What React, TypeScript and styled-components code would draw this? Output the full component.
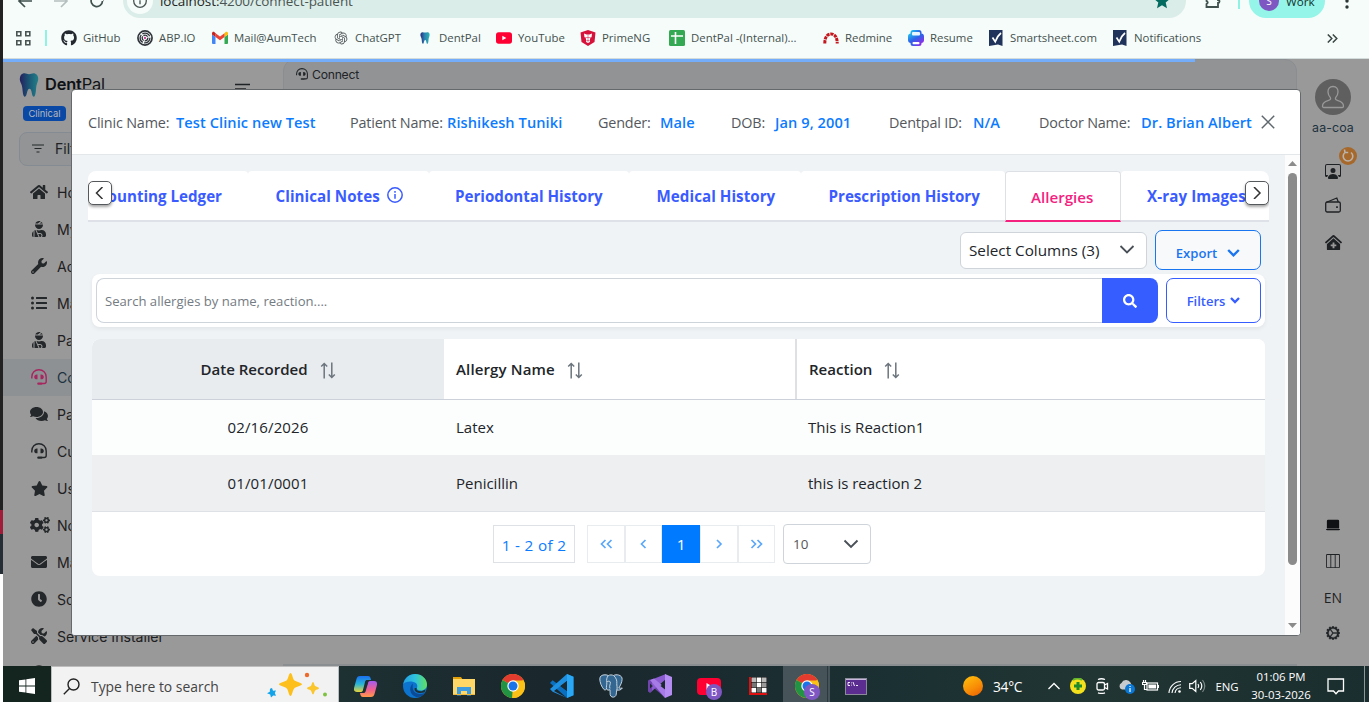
import type { ReactNode } from "react";
import styled, { createGlobalStyle } from "styled-components";
import { FaGithub, FaHome, FaUserInjured, FaWrench, FaListUl, FaComments, FaStar, FaCogs, FaEnvelope, FaClock, FaTools, FaSearch, FaClinicMedical } from "react-icons/fa";
import { BsPersonWorkspace, BsLaptopFill, BsLayoutThreeColumns, BsGearWideConnected } from "react-icons/bs";
import { SiOpenai } from "react-icons/si";

const GlobalStyle = createGlobalStyle`
  * { box-sizing: border-box; }
  body {
    margin: 0;
    overflow: hidden;
    font-family: "Open Sans", "Noto Sans", sans-serif;
    background: #fff;
  }
  svg { display: block; flex: none; }
`;

/* ---------- shell ---------- */

const Screen = styled.div`
  display: flex;
  width: 1369px;
  height: 702px;
  overflow: hidden;
`;

const EdgeStrip = styled.div`
  width: 3px;
  flex: none;
  background: linear-gradient(#222 0 510px, #a01c38 510px 534px, #252d35 534px 574px, #fff 574px);
`;

const Desktop = styled.div`
  flex: 1;
  min-width: 0;
  display: flex;
  flex-direction: column;
`;

const Text = styled.span<{ $ls?: number }>`
  white-space: nowrap;
  letter-spacing: ${(p) => p.$ls ?? 0}px;
`;

/* ---------- browser ---------- */

const BrowserHead = styled.div`
  height: 59px;
  flex: none;
  overflow: hidden;
  background: #f5fcfa;
  border-bottom: 1px solid #d3dcda;
`;

const AddressRow = styled.div`
  height: 34px;
  margin-top: -16px;
  display: flex;
  align-items: center;
`;

const NavIcons = styled.div`
  width: 120px;
  display: flex;
  gap: 20px;
  padding-left: 14px;
`;

const AddressBar = styled.div`
  width: 1063px;
  height: 34px;
  border-radius: 17px;
  background: #dbede8;
  display: flex;
  align-items: center;
  padding: 0 16px 0 4px;
  font-size: 13.5px;
  color: #4a5553;
  b { font-weight: 400; color: #1d2625; }
`;

const InfoBadge = styled.div`
  width: 26px;
  height: 26px;
  border-radius: 50%;
  background: #f5fcfa;
  display: grid;
  place-items: center;
  margin-right: 7px;
`;

const BarFill = styled.div`
  flex: 1;
`;

const Divider = styled.div`
  width: 2px;
  height: 16px;
  background: #8ff3e4;
`;

const Profile = styled.div`
  width: 76px;
  height: 34px;
  margin-left: 9px;
  border-radius: 17px;
  background: #94f5e8;
  display: flex;
  align-items: center;
  gap: 7px;
  padding: 0 0 0 10px;
  font-size: 11.6px;
  color: #12302c;
`;

const Disc = styled.span<{ $size: number }>`
  width: ${(p) => p.$size}px;
  height: ${(p) => p.$size}px;
  border-radius: 50%;
  background: #7e57c2;
  color: #fff;
  font-size: 10px;
  display: grid;
  place-items: center;
  flex: none;
`;

const Bookmarks = styled.div`
  height: 40px;
  display: flex;
  align-items: center;
  padding-left: 12px;
  font-size: 11.4px;
  color: #45514f;
  span { margin-top: -2px; }
`;

const Bookmark = styled.div<{ $w: number }>`
  width: ${(p) => p.$w}px;
  flex: none;
  display: flex;
  align-items: center;
  gap: 6px;
`;

/* ---------- app ---------- */

const AppArea = styled.div`
  position: relative;
  height: 607px;
  flex: none;
  display: flex;
  background: #999;
  overflow: hidden;
  font-family: Inter, sans-serif;
`;

const Progress = styled.div`
  position: absolute;
  left: 0;
  top: 0;
  width: 1192px;
  height: 3px;
  background: #74aefb;
`;

const Sidebar = styled.div`
  width: 280px;
  flex: none;
`;

const Brand = styled.div`
  height: 44px;
  padding: 14px 33px 0 16px;
  display: flex;
  align-items: flex-start;
  font-size: 16.4px;
  color: #101214;
  svg:last-child { margin-left: auto; margin-top: 10px; }
`;

const BrandName = styled.div`
  margin: 1px 0 0 6px;
  letter-spacing: -0.15px;
  b { font-weight: 600; }
`;

const ClinicBadge = styled.div`
  width: 43px;
  height: 15px;
  margin: 3px 0 0 20px;
  border-radius: 4px;
  background: #0a48a6;
  color: #b3b8bf;
  font-size: 9.4px;
  line-height: 15px;
  text-align: center;
`;

const FilterBox = styled.div`
  height: 34px;
  margin: 11px 20px 8px 16px;
  border: 1px solid #858b92;
  border-radius: 8px;
  background: #929495;
  display: flex;
  align-items: center;
  gap: 11px;
  padding: 0 0 2px 12px;
  font-size: 14px;
  color: #202325;
`;

const MenuItem = styled.div<{ $active?: boolean }>`
  height: 37px;
  display: flex;
  align-items: center;
  padding-left: 27px;
  font-size: 14.1px;
  color: ${(p) => (p.$active ? "#1d3240" : "#1d2022")};
  background: ${(p) => (p.$active ? "#8e9193" : "transparent")};
  svg { color: ${(p) => (p.$active ? "#a82560" : "#25282a")}; }
`;

const MenuIcon = styled.div`
  width: 18px;
  margin: -1px 9px 0 0;
  display: grid;
  place-items: center;
`;

const Main = styled.div`
  width: 1014px;
  flex: none;
  display: flex;
  flex-direction: column;
  justify-content: space-between;
`;

const MainTop = styled.div`
  height: 60px;
  border: 1px solid #8a8e91;
  border-radius: 12px 12px 0 0;
  background: #929395;
  padding: 7px 0 0 12px;
  display: flex;
  gap: 4px;
  font-size: 12.2px;
  letter-spacing: -0.25px;
  color: #202427;
  svg { margin-top: 1px; }
`;

const MainFoot = styled.div`
  height: 2px;
  background: #8a8e91;
`;

const Rail = styled.div`
  flex: 1;
  display: flex;
  flex-direction: column;
  align-items: center;
  color: #1f2225;
  font-size: 14px;
`;

const Avatar = styled.div`
  width: 36px;
  height: 36px;
  margin-top: 20px;
  border-radius: 50%;
  background: #5f5f5f;
  display: grid;
  place-items: center;
`;

const UserName = styled.div`
  margin: 5px 0 3px;
  font-size: 12.4px;
  line-height: 16px;
  letter-spacing: 0.1px;
  color: #1d3340;
`;

const RailSlot = styled.div<{ $h: number; $top?: number }>`
  position: relative;
  height: ${(p) => p.$h}px;
  margin-top: ${(p) => p.$top ?? 0}px;
  display: grid;
  place-items: center;
`;

const SyncBadge = styled.div`
  position: absolute;
  left: 14px;
  top: -8px;
`;

const Language = styled(Text)`
  font-family: "Open Sans", sans-serif;
`;

/* ---------- modal ---------- */

const Modal = styled.div`
  position: absolute;
  left: 68px;
  top: 30px;
  width: 1230px;
  height: 547px;
  border: 1px solid #65696c;
  border-radius: 4px;
  background: #fff;
  overflow: hidden;
  display: flex;
  flex-direction: column;
  font-family: "Open Sans", "Noto Sans", sans-serif;
  color: #212529;
`;

const ModalHead = styled.div`
  height: 65px;
  flex: none;
  border-bottom: 1px solid #e4e7ea;
  display: flex;
  align-items: center;
  padding-left: 16px;
  color: #54585c;
`;

const Field = styled.div<{ $w: number; $label: number }>`
  width: ${(p) => p.$w}px;
  display: flex;
  align-items: baseline;
  white-space: nowrap;
  span:first-child { width: ${(p) => p.$label}px; flex: none; font-size: 14.4px; letter-spacing: -0.18px; }
`;

const Value = styled(Text)`
  color: #0b7bff;
  font-size: 14.6px;
  font-weight: 600;
`;

const ModalBody = styled.div`
  flex: 1;
  display: flex;
  background: #eff3f6;
`;

const Content = styled.div`
  width: 1213px;
  padding: 16px 16px 0;
`;

const Scrollbar = styled.div`
  width: 15px;
  background: #fcfcfc;
  display: flex;
  flex-direction: column;
  align-items: center;
  padding: 6px 0 7px;
`;

const Thumb = styled.div`
  width: 9px;
  height: 392px;
  margin: 7px 0 auto;
  border-radius: 5px;
  background: #8b8b8b;
`;

const TabBar = styled.div`
  position: relative;
  width: 1181px;
  height: 51px;
  display: flex;
  overflow: hidden;
  border-radius: 8px 8px 0 0;
`;

const Tab = styled.div<{ $w: number; $active?: boolean; $end?: boolean }>`
  width: ${(p) => p.$w}px;
  flex: none;
  display: flex;
  align-items: center;
  justify-content: ${(p) => (p.$end ? "flex-end" : "flex-start")};
  gap: 7px;
  padding: 1px ${(p) => (p.$end ? 26 : 20)}px 0 ${(p) => (p.$active ? 25 : 26)}px;
  background: #fff;
  border-radius: 4px 4px 0 0;
  border: ${(p) => (p.$active ? "1px solid #dde1e6" : "0")};
  border-bottom: 2px solid ${(p) => (p.$active ? "#f5217f" : "#dee2e8")};
  color: ${(p) => (p.$active ? "#f5217f" : "#3a5bff")};
  font-size: 15.15px;
  font-weight: ${(p) => (p.$active ? 600 : 700)};
  overflow: hidden;
  svg { margin-top: -2px; }
`;

const ScrollButton = styled.div<{ $right?: boolean }>`
  position: absolute;
  top: 10px;
  ${(p) => (p.$right ? "right: 0;" : "left: 0;")}
  width: 24px;
  height: 24px;
  border: 1px solid #55595c;
  border-radius: 5px;
  background: #fff;
  box-shadow: 0 2px 3px rgba(0, 0, 0, 0.35);
  display: grid;
  place-items: center;
  color: #333;
`;

const Tools = styled.div`
  height: 40px;
  margin: 8px 8px 4px 0;
  display: flex;
  justify-content: flex-end;
  align-items: center;
  gap: 8px;
`;

const Select = styled.div<{ $w: number; $h: number }>`
  width: ${(p) => p.$w}px;
  height: ${(p) => p.$h}px;
  padding: 0 11px 0 8px;
  border: 1px solid #ced4da;
  border-radius: 6px;
  background: #fff;
  display: flex;
  align-items: center;
  justify-content: space-between;
  font-size: 15.25px;
  svg { color: #495057; }
`;

const PageSize = styled(Select)`
  margin-left: 8px;
  padding-left: 9px;
  border-radius: 4px;
  font-size: 13.4px;
  color: #555;
`;

const OutlineButton = styled.div<{ $w: number; $color: string }>`
  width: ${(p) => p.$w}px;
  align-self: stretch;
  border: 1px solid ${(p) => p.$color};
  border-radius: 7px;
  color: ${(p) => p.$color};
  display: flex;
  align-items: center;
  justify-content: center;
  font-size: 13.1px;
  font-weight: 600;
`;

const ExportButton = styled(OutlineButton)`
  background: #f7f9fb;
  gap: 10px;
  padding-top: 5px;
`;

const SearchCard = styled.div`
  width: 1173px;
  height: 53px;
  margin: 0 4px 12px;
  padding: 4px;
  border-radius: 8px;
  background: #fff;
  box-shadow: 0 2px 4px rgba(0, 0, 0, 0.06);
  display: flex;
`;

const SearchInput = styled.div`
  width: 1006px;
  border: 1px solid #ced4da;
  border-right: 0;
  border-radius: 8px 0 0 8px;
  display: flex;
  align-items: center;
  padding-left: 8px;
  font-size: 13.1px;
  color: #747b82;
`;

const SearchButton = styled.div`
  width: 56px;
  margin-right: 8px;
  border-radius: 0 8px 8px 0;
  background: #365dff;
  color: #fff;
  display: grid;
  place-items: center;
`;

const FilterButton = styled(OutlineButton)`
  font-size: 13px;
  gap: 5px;
  padding-top: 1px;
`;

const TableCard = styled.div`
  width: 1173px;
  height: 237px;
  margin: 0 4px;
  border-radius: 8px;
  background: #fff;
  overflow: hidden;
`;

const Row = styled.div<{ $h: number; $bg?: string; $line?: string }>`
  display: grid;
  grid-template-columns: 352px 352px 1fr;
  height: ${(p) => p.$h}px;
  background: ${(p) => p.$bg ?? "#fff"};
  border-bottom: 1px solid ${(p) => p.$line ?? "transparent"};
  font-size: 15px;
`;

const HeadRow = styled(Row)`
  grid-template-columns: 352px 353px 1fr;
  font-size: 15.05px;
`;

const Cell = styled.div<{ $center?: boolean }>`
  display: flex;
  align-items: center;
  justify-content: ${(p) => (p.$center ? "center" : "flex-start")};
  padding: 0 12px;
  letter-spacing: ${(p) => (p.$center ? 0.15 : 0)}px;
`;

const HeadCell = styled(Cell)<{ $shade?: boolean; $rule?: boolean }>`
  gap: 12px;
  font-weight: 600;
  letter-spacing: 0;
  background: ${(p) => (p.$shade ? "#e9ecef" : "transparent")};
  border-right: ${(p) => (p.$rule ? "2px solid #dee0e3" : "0")};
  svg { margin-top: 3px; }
`;

const Pager = styled.div`
  height: 64px;
  display: flex;
  align-items: center;
  padding-left: 401px;
`;

const PageInfo = styled.div`
  width: 82px;
  height: 38px;
  margin-right: 12px;
  padding-top: 1px;
  border: 1px solid #dee2e6;
  color: #0b7bff;
  font-size: 15.3px;
  letter-spacing: 0.3px;
  display: grid;
  place-items: center;
`;

const PageButton = styled.div<{ $active?: boolean; $w?: number }>`
  width: ${(p) => p.$w ?? 37}px;
  height: 38px;
  border: 1px solid ${(p) => (p.$active ? "#007bff" : "#e9ecef")};
  background: ${(p) => (p.$active ? "#007bff" : "#fff")};
  color: ${(p) => (p.$active ? "#fff" : "#5aa7fb")};
  font-size: 15.3px;
  display: grid;
  place-items: center;
`;

/* ---------- taskbar ---------- */

const Taskbar = styled.div`
  height: 36px;
  flex: none;
  display: flex;
  align-items: stretch;
  background: linear-gradient(90deg, #1d3032 0 25%, #1a272d 40%, #1b3032 65%, #213533 80%, #1b2e2f);
  color: #fff;
`;

const Start = styled.div`
  width: 48px;
  background: #14241f;
  display: grid;
  place-items: center;
`;

const TaskSearch = styled.div`
  width: 288px;
  background: #f2f2f2;
  border: 1px solid #bdbdbd;
  border-bottom: 0;
  display: flex;
  align-items: center;
  padding: 4px 10px 0 11px;
  color: #444;
  font-size: 13.9px;
  svg:last-child { margin-left: auto; margin-top: -3px; }
`;

const TaskIcons = styled.div`
  display: flex;
  width: 622px;
  padding-left: 2px;
`;

const TaskIcon = styled.div<{ $active?: boolean }>`
  position: relative;
  width: 49px;
  display: grid;
  place-items: center;
  padding-top: 4px;
  background: ${(p) => (p.$active ? "linear-gradient(90deg, transparent 1px, #46545a 1px 45px, #2c3a3e 45px 46px, #46545a 46px 48px, transparent 48px)" : "none")};
`;

const TaskBadge = styled.div`
  position: absolute;
  left: 22px;
  top: 18px;
`;

const Weather = styled.div`
  width: 81px;
  display: flex;
  align-items: center;
  gap: 10px;
  padding: 4px 0 0 2px;
  font-size: 13.8px;
`;

const Sun = styled.div`
  width: 20px;
  height: 20px;
  border-radius: 50%;
  background: linear-gradient(150deg, #ffc40c, #f88a06 60%, #e85d05);
`;

const Tray = styled.div<{ $w: number }>`
  width: ${(p) => p.$w}px;
  display: grid;
  place-items: center;
  padding-top: 4px;
  font-size: 11.4px;
`;

const Clock = styled.div`
  width: 72px;
  padding-top: 2px;
  font-size: 11.4px;
  line-height: 17.5px;
  text-align: center;
`;

const ShowDesktop = styled.div`
  margin-left: 9px;
  border-left: 1px solid #8b9696;
`;

/* ---------- drawings ---------- */

const Tooth = ({ w, h, dim }: { w: number; h: number; dim?: boolean }) => (
  <svg width={w} height={h} viewBox="0 0 20 24">
    <defs>
      <linearGradient id={dim ? "toothDim" : "tooth"} x1="0" x2="1">
        <stop offset="0" stopColor={dim ? "#252060" : "#2b2b80"} />
        <stop offset=".45" stopColor={dim ? "#1a5272" : "#2b7fb0"} />
        <stop offset="1" stopColor={dim ? "#238089" : "#2fb5b0"} />
      </linearGradient>
    </defs>
    <path fill={`url(#${dim ? "toothDim" : "tooth"})`} d="M4 .6C6.500-.3 8 1.200 10 1.200S14-.3 16.300.7c2.800 1.200 3.400 4.300 2.600 7.400-.6 2.400-1.400 3.600-1.700 6.400-.3 3-.5 9.200-2.500 9.200-2.200 0-1.500-7.900-4.200-7.900-2.800 0-2.300 7.900-4.600 7.900-2 0-2.200-6-2.600-9C3 11.800 1.800 10.500 1.100 8.100.3 5 1.200 1.700 4 .6z" />
  </svg>
);

const Headset = ({ size }: { size: number }) => (
  <svg width={size} height={size} viewBox="0 0 16 16" fill="none" stroke="currentColor" strokeWidth="1.400">
    <path d="M.8 9.500V8C.8 3.800 3.800.8 7.900.8s7.300 3 7.300 7.200v4.500c0 1.200-.8 2-2 2h-2.600" />
    <path fill="currentColor" stroke="none" d="M6.500 5.500v4.800c-2 .3-3.300-.8-3.300-2.400s1.300-2.700 3.300-2.400zM9.500 5.500v4.800c2 .3 3.300-.8 3.300-2.400S11.500 5.200 9.500 5.500z" />
    <path d="M7.300 14.700h3" strokeWidth="2.200" strokeLinecap="round" />
  </svg>
);

const WalletIcon = () => (
  <svg width="16" height="16" viewBox="0 0 16 16" fill="none" stroke="currentColor" strokeWidth="1.300">
    <rect x=".7" y="5" width="14.600" height="10" rx="1.500" />
    <path d="M1 5.500L11.800 1l1.500 4" />
    <path d="M12 9.300v1.600" strokeWidth="1.700" />
  </svg>
);

const InfoIcon = ({ size }: { size: number }) => (
  <svg width={size} height={size} viewBox="0 0 16 16" fill="none" stroke="currentColor" strokeWidth="1.500">
    <circle cx="8" cy="8" r="7.200" />
    <path d="M8 7v4.800M8 4v1.700" />
  </svg>
);

const GmailIcon = () => (
  <svg width="16" height="16" viewBox="0 0 16 16">
    <path fill="#4285f4" d="M1 14h2.500V7L0 4.500V13a1 1 0 0 0 1 1z" />
    <path fill="#34a853" d="M12.500 14H15a1 1 0 0 0 1-1V4.500L12.500 7z" />
    <path fill="#fbbc04" d="M12.500 3.500V7L16 4.500V3.200c0-1.300-1.500-2-2.500-1.200z" />
    <path fill="#ea4335" d="M3.500 7V3.300L8 6.600l4.500-3.300V7L8 10.300z" />
    <path fill="#c5221f" d="M0 3.200v1.300L3.500 7V3.300L2.500 2.200C1.500 1.200 0 1.900 0 3.200z" />
  </svg>
);

const AbpIcon = () => (
  <svg width="16" height="16" viewBox="0 0 17 17" fill="none" stroke="#30343a">
    <circle cx="8.500" cy="8.500" r="7.500" strokeWidth="1.800" />
    <circle cx="8.500" cy="8.500" r="5.200" strokeWidth="1.400" strokeDasharray="9 1.500" />
    <circle cx="8.500" cy="8.500" r="3" strokeWidth="1.400" strokeDasharray="5 1" />
    <circle cx="8.500" cy="8.500" r="1.200" fill="#c2418f" stroke="none" />
  </svg>
);

const YoutubeIcon = ({ w, h }: { w: number; h: number }) => (
  <svg width={w} height={h} viewBox="0 0 24 17">
    <rect width="24" height="17" rx="4" fill="#ff0033" />
    <path d="M9.500 5v7l6-3.500z" fill="#fff" />
  </svg>
);

const PrimeIcon = () => (
  <svg width="16" height="16" viewBox="0 0 16 16">
    <path fill="#d6113a" d="M8 0l7.500 2.400-1 9.600L8 16l-6.500-4L.5 2.400z" />
    <path fill="#fff" d="M4 3.600l2.500.8h3l2.500-.8-.5 4-1.500 1v3L8.800 13H7.200L6 11.600v-3l-1.500-1z" />
    <path stroke="#d6113a" strokeWidth=".5" d="M8 4.500V13M4 7.500h8M6.300 10.500h3.400" />
  </svg>
);

const SheetIcon = () => (
  <svg width="16" height="16" viewBox="0 0 16 16">
    <rect width="16" height="16" rx="1.500" fill="#34a853" />
    <path d="M6.500 2v12M2 6h12" stroke="#fff" strokeWidth="1.600" />
  </svg>
);

const RedmineIcon = () => (
  <svg width="16" height="16" viewBox="0 0 16 16" fill="none">
    <path d="M1.800 13.500C1.800 6 5 4 8 4s6.200 2 6.200 9.500" stroke="#c4161c" strokeWidth="3" strokeDasharray="3.200 .8" />
  </svg>
);

const ResumeIcon = () => (
  <svg width="16" height="16" viewBox="0 0 16 16">
    <defs>
      <linearGradient id="resume" x1="0" y1="0" x2="1" y2="1">
        <stop offset="0" stopColor="#1fc8ee" /><stop offset=".5" stopColor="#2e62e8" /><stop offset="1" stopColor="#9b26e8" />
      </linearGradient>
    </defs>
    <rect x="2.500" width="11" height="16" rx="2.500" fill="url(#resume)" />
    <rect y="3.500" width="16" height="9.500" rx="3" fill="url(#resume)" />
    <rect x="4" y="2" width="8" height="3.500" rx="1" fill="#e8f6ff" />
    <rect x="4.500" y="12" width="7" height="2.200" rx="1" fill="#fff" />
  </svg>
);

const SmartsheetIcon = () => (
  <svg width="15" height="16" viewBox="0 0 15 16">
    <path fill="#20335b" d="M0 0h13.500v16L9 14.500 0 16z" />
    <path d="M3.500 7.500l2.700 4.200C7.500 8 9.500 5 12 3" fill="none" stroke="#fff" strokeWidth="1.700" />
  </svg>
);

const Filter = () => (
  <svg width="12" height="9" viewBox="0 0 12 9" stroke="#25282a" strokeWidth="1.200">
    <path d="M0 1h12M2.500 4.500h7M4.500 8h3" />
  </svg>
);

const SortIcon = () => (
  <svg width="16" height="17" viewBox="0 0 16 17" fill="none" stroke="#6c757d" strokeWidth="1.500">
    <path d="M4.200 16.500V1.500M1.200 4.500l3-3 3 3M11.800.500v15M8.800 12.500l3 3 3-3" />
  </svg>
);

const Angles = ({ d, w = 14, stroke = 1.7 }: { d: string; w?: number; stroke?: number }) => (
  <svg width={w} height="12" viewBox={`0 0 ${w} 12`} fill="none" stroke="currentColor" strokeWidth={stroke}>
    <path d={d} />
  </svg>
);

const ChromeIcon = () => (
  <svg width="24" height="24" viewBox="0 0 24 24">
    <circle cx="12" cy="12" r="12" fill="#fbc116" />
    <path fill="#e33b2e" d="M12 12L1.600 6A12 12 0 0 1 22.400 6z" />
    <path fill="#229342" d="M12 12l-1 12A12 12 0 0 1 1.600 6z" />
    <path fill="#fbc116" d="M12 6.500h10.700A12 12 0 0 1 11.500 24l5.300-9.200z" />
    <circle cx="12" cy="12" r="5.700" fill="#fff" />
    <circle cx="12" cy="12" r="4.500" fill="#1a73e8" />
  </svg>
);

const CopilotIcon = () => (
  <svg width="23" height="21" viewBox="0 0 23 21">
    <defs>
      <linearGradient id="copA" x1="0" y1="0" x2="0" y2="1">
        <stop offset="0" stopColor="#1b6ff0" /><stop offset=".5" stopColor="#27b5d8" /><stop offset="1" stopColor="#e6d33a" />
      </linearGradient>
      <linearGradient id="copB" x1="0" y1="0" x2="0" y2="1">
        <stop offset="0" stopColor="#a45bf0" /><stop offset=".55" stopColor="#f0608e" /><stop offset="1" stopColor="#ff9a4a" />
      </linearGradient>
    </defs>
    <path fill="url(#copA)" d="M6 0h8c2 0 2.500 1.500 3 4h-4c-1 0-1.600.6-2 2L9 14c-.4 1.500-1 2-3 2H3c-3 0-3.500-2-2.700-5L2.500 3C3 1 4 0 6 0z" />
    <path fill="url(#copB)" d="M17 21H9c-2 0-2.500-1.500-3-4h3.500c1.200 0 1.800-.6 2.200-2L14 7c.4-1.500 1-2 3-2h3c3 0 3.500 2 2.700 5L20.500 18c-.5 2-1.500 3-3.500 3z" />
    <path fill="#1f3133" d="M12 6.500h2L11 14.500H9.300z" />
  </svg>
);

const EdgeIcon = () => (
  <svg width="24" height="24" viewBox="0 0 24 24">
    <defs>
      <linearGradient id="edgeTop" x1="0" x2="1"><stop offset="0" stopColor="#249fe0" /><stop offset=".5" stopColor="#2fc2df" /><stop offset="1" stopColor="#5fe060" /></linearGradient>
    </defs>
    <circle cx="12" cy="12" r="12" fill="#0c74cf" />
    <path fill="url(#edgeTop)" d="M.3 10C1.500 4 6.300 0 12 0c7 0 12 5 12 10.500 0 3.500-2.500 6-6 6-3 0-4.500-1.300-4-2.500.8-2 .5-5-3.500-6C6 7 2 8 .3 10z" />
    <path fill="#0a4a96" d="M10 9.500c-4 3-4 10 2 13 4 1.500 8-.5 10-3.500-8 3-14-1-12-9.500z" />
    <path fill="#1f3133" d="M13.500 14c-.5 2 1 3.500 5 3.300l4-1.800-.8 2.700c-5 2-11 .3-10-4.200z" />
  </svg>
);

const FolderIcon = () => (
  <svg width="22" height="19" viewBox="0 0 22 19">
    <path fill="#e3a008" d="M0 0h8l2 3H0z" />
    <rect y="2" width="22" height="16" fill="#ffd766" />
    <path fill="#3d9be0" d="M4 10h14v8.500h-4V14H8v4.500H4z" />
    <rect y="17" width="22" height="1" fill="#eeb93d" />
  </svg>
);

const VsCodeIcon = () => (
  <svg width="25" height="24" viewBox="0 0 25 24">
    <path fill="#0a6fbf" d="M18 0l6.500 2.800v18.400L18 24 1 9l2.600-2.700L18 17z" />
    <path fill="#1f8fe0" d="M18 24L3.600 17.700 1 15 18 0v7L5 17z" />
    <path fill="#2aa8f5" d="M18 0l6.500 2.800v18.400L18 24z" />
    <path fill="#1b2b30" d="M18 7v10l-6.500-5z" />
  </svg>
);

const PostgresIcon = () => (
  <svg width="24" height="24" viewBox="0 0 24 24" stroke="#c8d4dd" strokeWidth="1">
    <path fill="#336791" d="M5 15.500C2.500 13 .8 8 .8 5 .8 2 3 .8 6 .8c1.500 0 2.500.3 3.300.8C11 .6 13 .8 14.500 1.500 16 .7 18 .6 19.500 1c2.500.6 3.800 2.300 3.600 4.500-.2 3-1.700 6-3.300 8.500 1.200.4 2.300.2 3.500 0-1 2-3.500 2.500-5.500 2-.7 3 0 5.500-2 6.700-1.800 1-4.300.3-4.600-2-.3-1.800 0-3.500-.2-5-1.500.8-2.800.5-3.500-.7-.8 1-1.700 1.200-2.500.5z" />
    <path fill="none" d="M9.300 1.600C7.500 3.500 7.500 6 7.800 8.500c.2 2.300-.8 4.500-.3 6.500M14.500 1.500c2.500 2 3.700 5 3.300 8-.2 2 .8 4 0 6.500M7.800 8c1-1 3-1.200 3.500 0 .5 2-1.500 4-.3 6.500" />
  </svg>
);

const VsIcon = () => (
  <svg width="24" height="24" viewBox="0 0 24 24">
    <path fill="#6f44ab" d="M0 7l2-1.500L17 19v4.500L0 9z" />
    <path fill="#8b5bd0" d="M0 7l5 5-5 5 2 1.700L18 5V0z" />
    <path fill="#6f44ab" d="M0 7l2-1.500L4 7v10l-2 1.700L0 17z" />
    <path fill="#a67be8" d="M2 6l4-1.500 12 10V19l-1 5z" />
    <path fill="#b58cf2" d="M17 0l7 3v18l-7 3z" />
    <path fill="#1b2a2e" d="M2 9.500v5L4.500 12zM17 8.500v7L12.500 12z" />
  </svg>
);

const GridIcon = () => (
  <svg width="18" height="18" viewBox="0 0 18 18">
    <rect width="18" height="18" fill="#e01010" />
    <rect x="2" width="16" height="16" fill="#111" />
    {["#bbb", "#fff", "#bbb", "#777", "#fff", "#999", "#fff", "#777", "#fff"].map((fill, i) => (
      <rect key={i} x={2.5 + (i % 3) * 5.2} y={0.5 + Math.floor(i / 3) * 5.2} width="4.600" height="4.600" fill={fill} />
    ))}
  </svg>
);

const CmdIcon = () => (
  <svg width="22" height="17" viewBox="0 0 22 17">
    <rect x=".5" y=".5" width="21" height="16" fill="#5c2d91" stroke="#8a8a9a" />
    <path d="M1 1.500h20" stroke="#c9b8dd" />
    <path d="M5 4.500H3v3h2M6.500 4.500v.8M6.500 6.700v.8M8 4l1.500 4M11 7.500h2" stroke="#fff" fill="none" strokeWidth=".9" />
  </svg>
);

const Sparkles = () => (
  <svg width="62" height="28" viewBox="0 0 62 28">
    <path fill="#fdbf1c" d="M24.500 2c1.600 0 2.200 5.600 3.700 7.200 1.500 1.500 7.800 2.500 7.800 4.100s-6.300 2.600-7.800 4.100c-1.500 1.500-2.100 7.600-3.700 7.600s-2.200-6.100-3.700-7.600C19.300 15.900 13 14.900 13 13.300s6.300-2.600 7.800-4.100C22.300 7.600 22.900 2 24.500 2z" />
    <path fill="#fbc62c" d="M47 11c1 0 1.300 3.200 2.200 4.100.9.900 3.800 1.200 3.800 2.200s-2.900 1.300-3.800 2.200c-.9.900-1.200 4-2.200 4s-1.300-3.100-2.200-4c-.9-.9-3.800-1.200-3.800-2.200s2.900-1.300 3.800-2.200c.9-.9 1.200-4.100 2.200-4.100z" />
    <path fill="#12a3e8" d="M6 17l1 2.800 3-.3-1.200 2.500 1.200 2.800-2.800-.3L5 26.500l-.8-3L1 22.300l2.800-1.500.2-3z" />
    <circle cx="41" cy="4" r="2.200" fill="#ee6a2c" />
    <circle cx="59" cy="23.500" r="2" fill="#7fc241" />
  </svg>
);

/* ---------- data ---------- */

const bookmarks: { w: number; name: string; icon: ReactNode }[] = [
  { w: 76, name: "GitHub", icon: <FaGithub size={16} color="#24292f" /> },
  { w: 75, name: "ABP.IO", icon: <AbpIcon /> },
  { w: 121, name: "Mail@AumTech", icon: <GmailIcon /> },
  { w: 84, name: "ChatGPT", icon: <SiOpenai size={16} color="#55595c" viewBox="-3 -3 30 30" /> },
  { w: 79, name: "DentPal", icon: <Tooth w={16} h={12} /> },
  { w: 84, name: "YouTube", icon: <YoutubeIcon w={16} h={12} /> },
  { w: 89, name: "PrimeNG", icon: <PrimeIcon /> },
  { w: 154, name: "DentPal -(Internal)...", icon: <SheetIcon /> },
  { w: 85, name: "Redmine", icon: <RedmineIcon /> },
  { w: 81, name: "Resume", icon: <ResumeIcon /> },
  { w: 124, name: "Smartsheet.com", icon: <SmartsheetIcon /> },
  { w: 120, name: "Notifications", icon: <SmartsheetIcon /> },
];

const menu: [ReactNode, string][] = [
  [<FaHome size={18} />, "Home"],
  [<FaUserInjured size={16} />, "My"],
  [<FaWrench size={16} />, "Acc"],
  [<FaListUl size={16} />, "Man"],
  [<FaUserInjured size={16} />, "Pati"],
  [<Headset size={16} />, "Connect"],
  [<FaComments size={18} />, "Pay"],
  [<Headset size={16} />, "Cust"],
  [<FaStar size={17} />, "User"],
  [<FaCogs size={20} />, "Note"],
  [<FaEnvelope size={16} />, "Mail"],
  [<FaClock size={16} />, "Sche"],
  [<FaTools size={16} />, "Service Installer"],
];

const fields: { w: number; label: number; name: string; value: string }[] = [
  { w: 262, label: 88, name: "Clinic Name:", value: "Test Clinic new Test" },
  { w: 248, label: 97, name: "Patient Name:", value: "Rishikesh Tuniki" },
  { w: 133, label: 62, name: "Gender:", value: "Male" },
  { w: 158, label: 44, name: "DOB:", value: "Jan 9, 2001" },
  { w: 150, label: 84, name: "Dentpal ID:", value: "N/A" },
  { w: 222, label: 102, name: "Doctor Name:", value: "Dr. Brian Albert" },
];

const rows = [
  ["02/16/2026", "Latex", "This is Reaction1"],
  ["01/01/0001", "Penicillin", "this is reaction 2"],
];

const Browser = () => (
  <BrowserHead>
    <AddressRow>
      <NavIcons>
        <svg width="16" height="16" viewBox="0 0 16 16" fill="none" stroke="#40514e" strokeWidth="1.700"><path d="M15 8H3M8 2L2 8l6 6" /></svg>
        <svg width="16" height="16" viewBox="0 0 16 16" fill="none" stroke="#b5bfbd" strokeWidth="1.700"><path d="M1 8h12M8 2l6 6-6 6" /></svg>
        <svg width="16" height="16" viewBox="0 0 16 16" fill="none" stroke="#40514e" strokeWidth="1.700"><path d="M13.500 8A5.700 5.700 0 1 1 11.500 3.500L14 6V1.500" /></svg>
      </NavIcons>
      <AddressBar>
        <InfoBadge><InfoIcon size={14} /></InfoBadge>
        <Text $ls={-0.07}><b>localhost:</b>4200/connect-patient</Text>
        <BarFill />
        <svg width="16" height="16" viewBox="0 0 16 16"><path fill="#046b60" d="M8 0l2.300 5.300 5.700.5-4.300 3.800L13 15.300l-5-3-5 3 1.300-5.700L0 5.800l5.700-.5z" /></svg>
      </AddressBar>
      <svg width="18" height="16" viewBox="0 0 18 16" fill="none" stroke="#40514e" strokeWidth="1.800" style={{ margin: "0 16px 0 18px" }}><path d="M3 3h4.500a1.500 1.500 0 0 1 3 0H14v4a1.500 1.500 0 0 1 0 3v4H2.500V11q2.500-1.500 0-3z" /></svg>
      <Divider />
      <Profile><Disc $size={20}>S</Disc>Work</Profile>
      <svg width="4" height="18" viewBox="0 0 4 18" fill="#2c3735" style={{ marginLeft: 20 }}><circle cx="2" cy="3" r="1.700" /><circle cx="2" cy="9" r="1.700" /><circle cx="2" cy="15" r="1.700" /></svg>
    </AddressRow>
    <Bookmarks>
      <svg width="16" height="16" viewBox="0 0 16 16" fill="none" stroke="#4a5553" strokeWidth="1.600"><path d="M1.800 1.800h4v4h-4zM10.800 1.800h4v4h-4zM1.800 10.800h4v4h-4zM10.800 10.800h4v4h-4z" /></svg>
      <Divider style={{ margin: "0 14px" }} />
      {bookmarks.map((b) => (
        <Bookmark key={b.name} $w={b.w}>{b.icon}<Text>{b.name}</Text></Bookmark>
      ))}
      <svg width="11" height="9" viewBox="0 0 11 9" fill="none" stroke="#3b4644" strokeWidth="1.500" style={{ marginLeft: 94 }}><path d="M.8.500l4 4-4 4M5.800.500l4 4-4 4" /></svg>
    </Bookmarks>
  </BrowserHead>
);

const SideMenu = () => (
  <Sidebar>
    <Brand>
      <Tooth w={20} h={24} dim />
      <BrandName><b>Dent</b>Pal</BrandName>
      <svg width="15" height="12" viewBox="0 0 15 12" stroke="#1f2225" strokeWidth="1.500"><path d="M0 1.500h15M0 6h11M0 10.500h7" /></svg>
    </Brand>
    <ClinicBadge>Clinical</ClinicBadge>
    <FilterBox><Filter />Filter</FilterBox>
    {menu.map(([icon, name]) => (
      <MenuItem key={name} $active={name === "Connect"}><MenuIcon>{icon}</MenuIcon>{name}</MenuItem>
    ))}
    <MenuItem><MenuIcon><FaClock size={16} /></MenuIcon></MenuItem>
  </Sidebar>
);

const RightRail = () => (
  <Rail>
    <Avatar>
      <svg width="24" height="24" viewBox="0 0 24 24" fill="none" stroke="#999" strokeWidth="1.300"><path d="M12 1.500c3.500 0 5.200 2.300 5 5.500-.1 2.300-1 4.300-2.300 5.500-.8 1.500 0 2.500 2.300 3.200 3.500 1 5.500 2.500 5.500 5.500 0 .8-.5 1.300-1.300 1.300H2.800c-.8 0-1.300-.5-1.300-1.300 0-3 2-4.500 5.500-5.500 2.300-.7 3.100-1.700 2.300-3.200C8 11.300 7.100 9.300 7 7c-.2-3.200 1.500-5.500 5-5.500z" /></svg>
    </Avatar>
    <UserName>aa-coa</UserName>
    <RailSlot $h={32} $top={16}>
      <BsPersonWorkspace size={16} />
      <SyncBadge>
        <svg width="18" height="18" viewBox="0 0 18 18"><circle cx="9" cy="9" r="9" fill="#a6682b" /><path d="M6 5.500A4.800 4.800 0 1 0 12 5.500M6 5.800L5.500 2.500M6 5.500h3.200" fill="none" stroke="#b9b3ac" strokeWidth="1.600" /></svg>
      </SyncBadge>
    </RailSlot>
    <RailSlot $h={36}><WalletIcon /></RailSlot>
    <RailSlot $h={38}><FaClinicMedical size={17} /></RailSlot>
    <RailSlot $h={36} $top={246}><BsLaptopFill size={14} color="#101115" /></RailSlot>
    <RailSlot $h={36}><BsLayoutThreeColumns size={14} /></RailSlot>
    <RailSlot $h={37}><Language>EN</Language></RailSlot>
    <RailSlot $h={34}><BsGearWideConnected size={14} stroke="currentColor" strokeWidth=".4" /></RailSlot>
  </Rail>
);

const PatientModal = () => (
  <Modal>
    <ModalHead>
      {fields.map((f) => (
        <Field key={f.name} $w={f.w} $label={f.label}><Text>{f.name}</Text><Value $ls={0.08}>{f.value}</Value></Field>
      ))}
      <svg width="14" height="14" viewBox="0 0 14 14" stroke="#5f676e" strokeWidth="1.500"><path d="M.8.800l12.400 12.400M13.200.800L.8 13.200" /></svg>
    </ModalHead>
    <ModalBody>
      <Content>
        <TabBar>
          <Tab $w={160} $end><Text>Accounting Ledger</Text></Tab>
          <Tab $w={181}><Text $ls={0.04}>&#8202;Clinical Notes</Text><InfoIcon size={16} /></Tab>
          <Tab $w={200}><Text>Periodontal History</Text></Tab>
          <Tab $w={172}><Text $ls={0.04}>&#8202;Medical History</Text></Tab>
          <Tab $w={204}><Text>&#8202;Prescription History</Text></Tab>
          <Tab $w={116} $active><Text>Allergies</Text></Tab>
          <Tab $w={160}><Text $ls={0.1}>X-ray Images</Text></Tab>
          <ScrollButton><Angles w={12} stroke={1.5} d="M8.500 0l-6 6 6 6" /></ScrollButton>
          <ScrollButton $right><Angles w={12} stroke={1.5} d="M3 0l6 6-6 6" /></ScrollButton>
        </TabBar>
        <Tools>
          <Select $w={187} $h={37}>
            <Text>Select Columns (3)</Text>
            <Angles w={16} stroke={1.8} d="M1.500 2L8 8.500 14.500 2" />
          </Select>
          <ExportButton $w={106} $color="#1a75f0"><Text>Export</Text><Angles w={13} stroke={2.4} d="M1.200 3l5.300 5.300L11.800 3" /></ExportButton>
        </Tools>
        <SearchCard>
          <SearchInput><Text>Search allergies by name, reaction....</Text></SearchInput>
          <SearchButton><FaSearch size={14} /></SearchButton>
          <FilterButton $w={95} $color="#365dff"><Text>Filters</Text><Angles w={10} stroke={2.3} d="M1 3l4 4 4-4" /></FilterButton>
        </SearchCard>
        <TableCard>
          <HeadRow $h={61} $line="#cdd1d9">
            <HeadCell $center $shade><Text>Date Recorded</Text><SortIcon /></HeadCell>
            <HeadCell $rule><Text $ls={0.12}>Allergy Name</Text><SortIcon /></HeadCell>
            <HeadCell><Text>Reaction</Text><SortIcon /></HeadCell>
          </HeadRow>
          {rows.map((r, i) => (
            <Row key={r[0]} $h={i ? 57 : 55} $bg={i ? "#eeeff1" : "#fcfdfd"} $line={i ? "#dee2e6" : undefined}>
              <Cell $center>{r[0]}</Cell>
              <Cell>{r[1]}</Cell>
              <Cell>{r[2]}</Cell>
            </Row>
          ))}
          <Pager>
            <PageInfo>1 - 2 of 2</PageInfo>
            <PageButton $w={38}><Angles d="M6.500 2l-4 4 4 4M12.500 2l-4 4 4 4" /></PageButton>
            <PageButton><Angles d="M8.500 2l-4 4 4 4" /></PageButton>
            <PageButton $active $w={38}>1</PageButton>
            <PageButton $w={38}><Angles d="M5 2l4 4-4 4" /></PageButton>
            <PageButton><Angles d="M1.500 2l4 4-4 4M7.500 2l4 4-4 4" /></PageButton>
            <PageSize $w={88} $h={40}>
              <Text>10</Text>
              <Angles w={16} stroke={1.9} d="M1.500 2.500L8 9l6.500-6.500" />
            </PageSize>
          </Pager>
        </TableCard>
      </Content>
      <Scrollbar>
        <svg width="9" height="5"><path d="M0 5l4.500-5L9 5z" fill="#8b8b8b" /></svg>
        <Thumb />
        <svg width="9" height="5"><path d="M0 0l4.500 5L9 0z" fill="#8b8b8b" /></svg>
      </Scrollbar>
    </ModalBody>
  </Modal>
);

const WindowsTaskbar = () => (
  <Taskbar>
    <Start>
      <svg width="16" height="16" viewBox="0 0 16 16" fill="#fff" style={{ marginTop: 3 }}><path d="M0 2.300L6.500 1.400v6.200H0zM7.300 1.300L16 0v7.600H7.300zM0 8.400h6.500v6.200L0 13.700zM7.300 8.400H16V16l-8.700-1.300z" /></svg>
    </Start>
    <TaskSearch>
      <svg width="17" height="17" viewBox="0 0 17 17" fill="none" stroke="#222" strokeWidth="1.400" style={{ marginRight: 11 }}><circle cx="10.500" cy="6.500" r="5.500" /><path d="M6.500 10.500L.8 16.200" /></svg>
      <Text>Type here to search</Text>
      <Sparkles />
    </TaskSearch>
    <TaskIcons>
      <TaskIcon><CopilotIcon /></TaskIcon>
      <TaskIcon><EdgeIcon /></TaskIcon>
      <TaskIcon><FolderIcon /></TaskIcon>
      <TaskIcon><ChromeIcon /></TaskIcon>
      <TaskIcon><VsCodeIcon /></TaskIcon>
      <TaskIcon><PostgresIcon /></TaskIcon>
      <TaskIcon><VsIcon /></TaskIcon>
      <TaskIcon><YoutubeIcon w={24} h={17} /><TaskBadge><Disc $size={16}>B</Disc></TaskBadge></TaskIcon>
      <TaskIcon><GridIcon /></TaskIcon>
      <TaskIcon $active><ChromeIcon /><TaskBadge><Disc $size={16}>S</Disc></TaskBadge></TaskIcon>
      <TaskIcon><CmdIcon /></TaskIcon>
    </TaskIcons>
    <Weather><Sun /><Text $ls={-0.3}>34°C</Text></Weather>
    <Tray $w={24}><svg width="12" height="8" viewBox="0 0 12 8" fill="none" stroke="#fff" strokeWidth="1.300"><path d="M.5 7L6 1.500 11.500 7" /></svg></Tray>
    <Tray $w={24}>
      <svg width="16" height="16" viewBox="0 0 16 16"><circle cx="8" cy="8" r="8" fill="#f4e01c" /><path d="M8 4v8M4 8h8" stroke="#1f8a2c" strokeWidth="3" /><path d="M3 2a8 8 0 0 1 9 0" stroke="#62b52c" strokeWidth="2" fill="none" /></svg>
    </Tray>
    <Tray $w={24}>
      <svg width="13" height="16" viewBox="0 0 13 16" fill="none" stroke="#fff" strokeWidth="1.300"><rect x="1" y="4.500" width="7.500" height="7.500" rx="1.500" /><path d="M8.500 7l3-1.500v5.500l-3-1.500M2 1.500q3.500-1.500 7 0M2 14.800q3.500 1.300 7 0" /></svg>
    </Tray>
    <Tray $w={24}>
      <svg width="17" height="15" viewBox="0 0 17 15"><path fill="#c9ccce" d="M4 10.500A3.500 3.500 0 0 1 3.500 4 5 5 0 0 1 12.500 3.500L14 7l-6 3.500z" /><circle cx="12" cy="10" r="5" fill="#0a78d4" /><path d="M12 9v4M12 7v1" stroke="#fff" strokeWidth="1.200" /></svg>
    </Tray>
    <Tray $w={24}>
      <svg width="17" height="12" viewBox="0 0 17 12" fill="none" stroke="#fff" strokeWidth="1.200"><rect x="5" y="3" width="10.500" height="7" /><path fill="#fff" d="M7 5h6.500v3H7z" /><path d="M16.500 5v3M.5 2.500h4v2h-4zM1.500 0v2.500M3.500 0v2.500M2.500 5v4.500h2.500" /></svg>
    </Tray>
    <Tray $w={24}>
      <svg width="13" height="13" viewBox="0 0 13 13" fill="none" stroke="#fff" strokeWidth="1.100"><path d="M1 13A12 12 0 0 1 13 1.500M4 13a9 9 0 0 1 9-8.300M7 13a6 6 0 0 1 6-5.300" /><circle cx="11.500" cy="11.500" r="1.300" fill="#fff" stroke="none" /></svg>
    </Tray>
    <Tray $w={23}>
      <svg width="17" height="14" viewBox="0 0 17 14" fill="none" stroke="#fff" strokeWidth="1.200"><path d="M.7 4.700h2.500L6.800 1.500v11L3.200 9.300H.7zM9 5q1.500 2 0 4M11.300 3q3 4 0 8" /><path d="M13.500 1q4.500 6 0 12" stroke="#7b8787" /></svg>
    </Tray>
    <Tray $w={36}>ENG</Tray>
    <Clock><Text>01:06 PM</Text><br /><Text>30-03-2026</Text></Clock>
    <Tray $w={38}>
      <svg width="18" height="17" viewBox="0 0 18 17" fill="none" stroke="#fff" strokeWidth="1.300"><path d="M1 1h15.500v12h-5L9 15.800 6.500 13H1z" /></svg>
    </Tray>
    <ShowDesktop />
  </Taskbar>
);

export default function App() {
  return (
    <Screen>
      <GlobalStyle />
      <EdgeStrip />
      <Desktop>
        <Browser />
        <AppArea>
          <SideMenu />
          <Main>
            <MainTop><Headset size={12} />Connect</MainTop>
            <MainFoot />
          </Main>
          <RightRail />
          <Progress />
          <PatientModal />
        </AppArea>
        <WindowsTaskbar />
      </Desktop>
    </Screen>
  );
}
